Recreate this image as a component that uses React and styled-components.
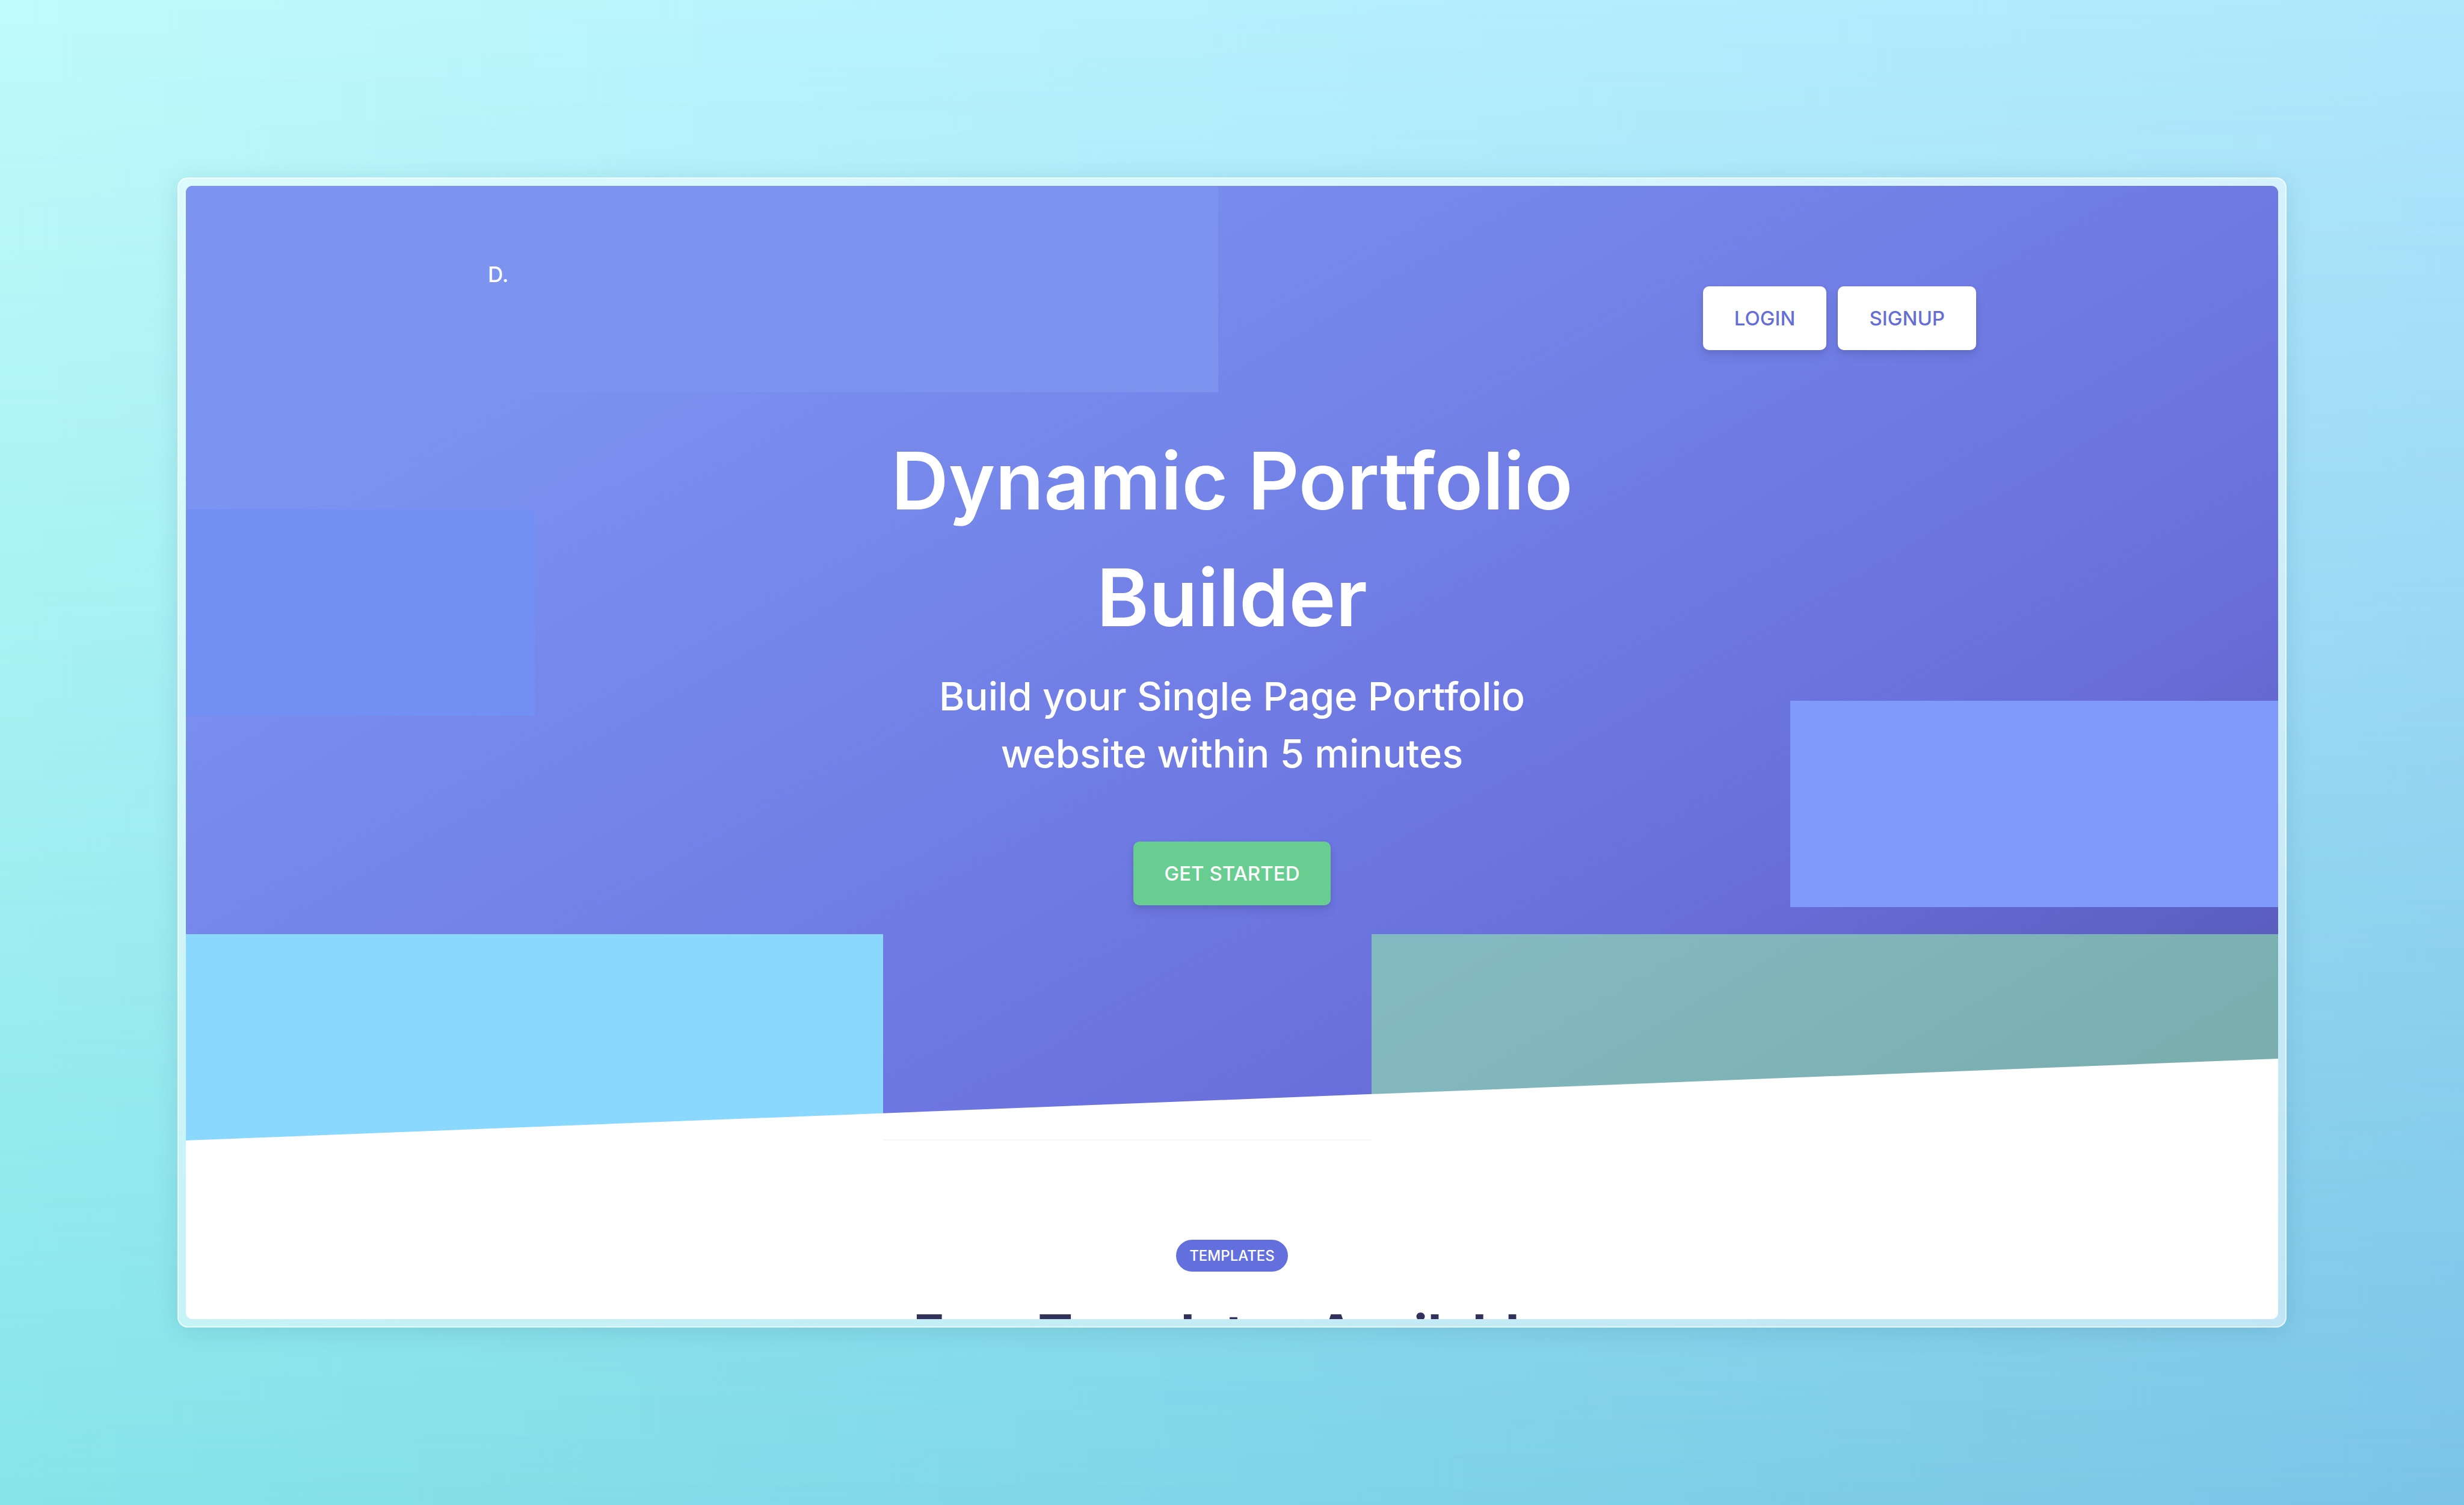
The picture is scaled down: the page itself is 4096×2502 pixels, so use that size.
import React from "react";
import styled, { createGlobalStyle } from "styled-components";

const GlobalStyle = createGlobalStyle`
  * { box-sizing: border-box; }
  body {
    margin: 0;
    font-family: Inter, "Open Sans", sans-serif;
    color: #32325d;
  }
`;

const Backdrop = styled.div`
  position: relative;
  display: flex;
  height: 100vh;
  padding: 295px;
  background: linear-gradient(90deg, #c0fbfb, #b9f4fd 30%, #b0e7fd);

  &::before {
    content: "";
    position: absolute;
    inset: 0;
    background: linear-gradient(90deg, #86e5e9, #7ac4e7);
    mask-image: linear-gradient(180deg, transparent, #000);
  }
`;

const Frame = styled.div`
  position: relative;
  display: flex;
  flex: 1;
  min-height: 0;
  padding: 12px;
  border: 2px solid rgba(255, 255, 255, 0.6);
  border-radius: 17px;
  background: rgba(255, 255, 255, 0.5);
  box-shadow: 0 6px 40px rgba(0, 60, 80, 0.12);
`;

const Screen = styled.div`
  flex: 1;
  overflow: hidden;
  border-radius: 11px;
  background: #fff;
`;

const Hero = styled.section`
  position: relative;
  padding: 121px 0 391px;
  background: linear-gradient(150deg, #7c94f1 15%, #6b73df 67%, #686dd8 75%, #575ab9 94%);
`;

const Block = styled.span`
  position: absolute;
  top: ${(p) => p.$top};
  bottom: ${(p) => p.$bottom};
  left: ${(p) => p.$left};
  right: ${(p) => p.$right};
  width: ${(p) => p.$width};
  height: 343px;
  background: ${(p) => p.$color};
`;

const Slope = styled.svg`
  position: absolute;
  left: 0;
  bottom: 0;
  display: block;
  width: 100%;
  height: 136px;
`;

const Seam = styled.span`
  position: absolute;
  left: 33.3%;
  right: 43.3%;
  bottom: 0;
  height: 2px;
  background: #f6f6fa;
`;

const Nav = styled.nav`
  position: relative;
  display: flex;
  justify-content: space-between;
  align-items: flex-start;
  max-width: 2474px;
  margin: 0 auto;
`;

const Brand = styled.a`
  color: #fff;
  font-size: 35px;
  font-weight: 500;
  line-height: 52px;
  text-decoration: none;
`;

const Actions = styled.div`
  display: flex;
  gap: 19px;
  padding-top: 46px;
`;

const Button = styled.button`
  height: 106px;
  padding: 0 52px;
  border: 0;
  border-radius: 10px;
  background: ${(p) => (p.$primary ? "#68cd90" : "#fff")};
  color: ${(p) => (p.$primary ? "#fff" : "#656ed6")};
  font-family: inherit;
  font-size: 33px;
  font-weight: 500;
  line-height: 52px;
  text-transform: uppercase;
  box-shadow: 0 10px 15px rgba(50, 50, 93, 0.12), 0 3px 8px rgba(0, 0, 0, 0.08);
`;

const Intro = styled.div`
  position: relative;
  display: flex;
  flex-direction: column;
  align-items: center;
  max-width: 1180px;
  margin: 120px auto 0;
  color: #fff;
  text-align: center;
`;

const Title = styled.h1`
  margin: 0 0 20px;
  font-size: 132px;
  font-weight: 600;
  line-height: 194px;
`;

const Lead = styled.p`
  max-width: 1100px;
  margin: 0 0 99px;
  font-size: 65px;
  font-weight: 500;
  line-height: 95px;
`;

const Templates = styled.section`
  display: flex;
  flex-direction: column;
  align-items: center;
  gap: 45px;
  padding: 165px 0;
`;

const Badge = styled.span`
  padding: 0 22px;
  border-radius: 27px;
  background: #626fdd;
  color: #fff;
  font-size: 24px;
  font-weight: 500;
  line-height: 53px;
  text-transform: uppercase;
`;

const SectionTitle = styled.h2`
  margin: 0;
  font-size: 87px;
  font-weight: 700;
  line-height: 115px;
  white-space: nowrap;
`;

export default function App() {
  return (
    <>
      <GlobalStyle />
      <Backdrop>
        <Frame>
          <Screen>
            <Hero>
              <Block $top="0" $left="0" $width="49.35%" $color="#7c93ef" />
              <Block $top="538px" $left="0" $width="16.67%" $color="#748ff3" />
              <Block $top="856px" $right="0" $width="23.33%" $color="#7f9afa" />
              <Block $bottom="0" $left="0" $width="33.33%" $color="#8ad8fe" />
              <Block $bottom="0" $right="0" $width="43.33%" $color="rgba(152, 244, 168, 0.55)" />
              <Nav>
                <Brand href="#home">D.</Brand>
                <Actions>
                  <Button type="button">Login</Button>
                  <Button type="button">Signup</Button>
                </Actions>
              </Nav>
              <Intro>
                <Title>Dynamic Portfolio Builder</Title>
                <Lead>Build your Single Page Portfolio website within 5 minutes</Lead>
                <Button type="button" $primary>Get Started</Button>
              </Intro>
              <Slope viewBox="0 0 100 100" preserveAspectRatio="none" aria-hidden="true">
                <polygon points="100 0 100 100 0 100" fill="#fff" />
              </Slope>
              <Seam />
            </Hero>
            <Templates>
              <Badge>Templates</Badge>
              <SectionTitle>Free Templates Available</SectionTitle>
            </Templates>
          </Screen>
        </Frame>
      </Backdrop>
    </>
  );
}
